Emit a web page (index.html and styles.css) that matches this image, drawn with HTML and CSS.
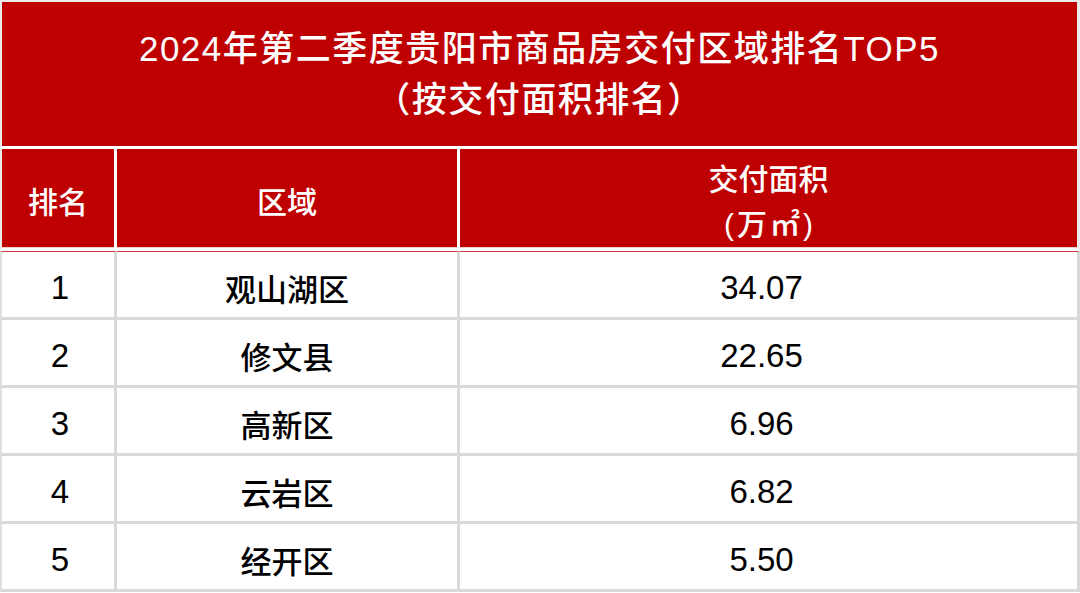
FILE: index.html
```html
<!DOCTYPE html>
<html lang="zh-CN">
<head>
<meta charset="utf-8">
<title>2024年第二季度贵阳市商品房交付区域排名TOP5</title>
<link rel="stylesheet" href="styles.css">
</head>
<body>
<table class="rank-table">
  <colgroup>
    <col class="col-rank">
    <col class="col-area">
    <col class="col-value">
  </colgroup>
  <thead>
    <tr>
      <th class="title" colspan="3">
        <div class="title-line">2024年第二季度贵阳市商品房交付区域排名TOP5</div>
        <div class="title-line">（按交付面积排名）</div>
      </th>
    </tr>
    <tr class="head-row">
      <th class="h-rank">排名</th>
      <th class="h-area">区域</th>
      <th class="h-value"><div>交付面积</div><div class="unit">(万㎡)</div></th>
    </tr>
  </thead>
  <tbody>
    <tr><td class="c-rank">1</td><td class="c-area">观山湖区</td><td class="c-value">34.07</td></tr>
    <tr><td class="c-rank">2</td><td class="c-area">修文县</td><td class="c-value">22.65</td></tr>
    <tr><td class="c-rank">3</td><td class="c-area">高新区</td><td class="c-value">6.96</td></tr>
    <tr><td class="c-rank">4</td><td class="c-area">云岩区</td><td class="c-value">6.82</td></tr>
    <tr><td class="c-rank">5</td><td class="c-area">经开区</td><td class="c-value">5.50</td></tr>
  </tbody>
</table>
</body>
</html>
```

FILE: styles.css
```css
html, body {
  margin: 0;
  padding: 0;
  background: #ffffff;
}

body {
  width: 1080px;
  height: 593px;
  overflow: hidden;
  font-family: "Liberation Sans", "Noto Sans CJK SC", sans-serif;
}

.rank-table {
  width: 1080px;
  table-layout: fixed;
  border-collapse: separate;
  border-spacing: 0;
}

.col-rank { width: 117px; }
.col-area { width: 343px; }
.col-value { width: 620px; }

.rank-table th,
.rank-table td {
  padding: 0;
  text-align: center;
  vertical-align: middle;
  box-sizing: border-box;
}

.title {
  height: 149px;
  background: #bf0000;
  color: #ffffff;
  font-size: 35px;
  font-weight: 500;
  letter-spacing: 1.5px;
  line-height: 51px;
  border-top: 2px solid #ececec;
  border-left: 2px solid #ececec;
  border-right: 3px solid #ececec;
  border-bottom: 3px solid #ffffff;
  padding-top: 14px;
}

.head-row th {
  height: 102px;
  background: #bf0000;
  color: #ffffff;
  font-size: 30px;
  font-weight: 500;
  line-height: 45px;
  border-right: 3px solid #ffffff;
  border-bottom: 3px solid #ffffff;
  box-shadow: inset 0 -1px 0 #f3d0d0;
  padding-top: 7px;
}

.head-row .h-rank {
  border-left: 2px solid #ececec;
}

.head-row .h-value {
  border-right: 3px solid #ececec;
}

.unit {
  letter-spacing: 3px;
  padding-left: 3px;
}

.rank-table td {
  height: 68px;
  color: #000000;
  font-size: 31px;
  font-weight: 500;
  border-right: 3px solid #d9d9d9;
  border-bottom: 3px solid #d9d9d9;
  padding-top: 6px;
}

.rank-table tbody tr:first-child td {
  height: 69px;
  border-top: 1px solid #c83a3a;
}

.rank-table td.c-rank {
  border-left: 2px solid #e0e0e0;
  font-size: 33px;
  font-weight: 400;
  padding-left: 4px;
}

.rank-table td.c-value {
  font-size: 33px;
  font-weight: 400;
  padding-right: 14px;
}
```
